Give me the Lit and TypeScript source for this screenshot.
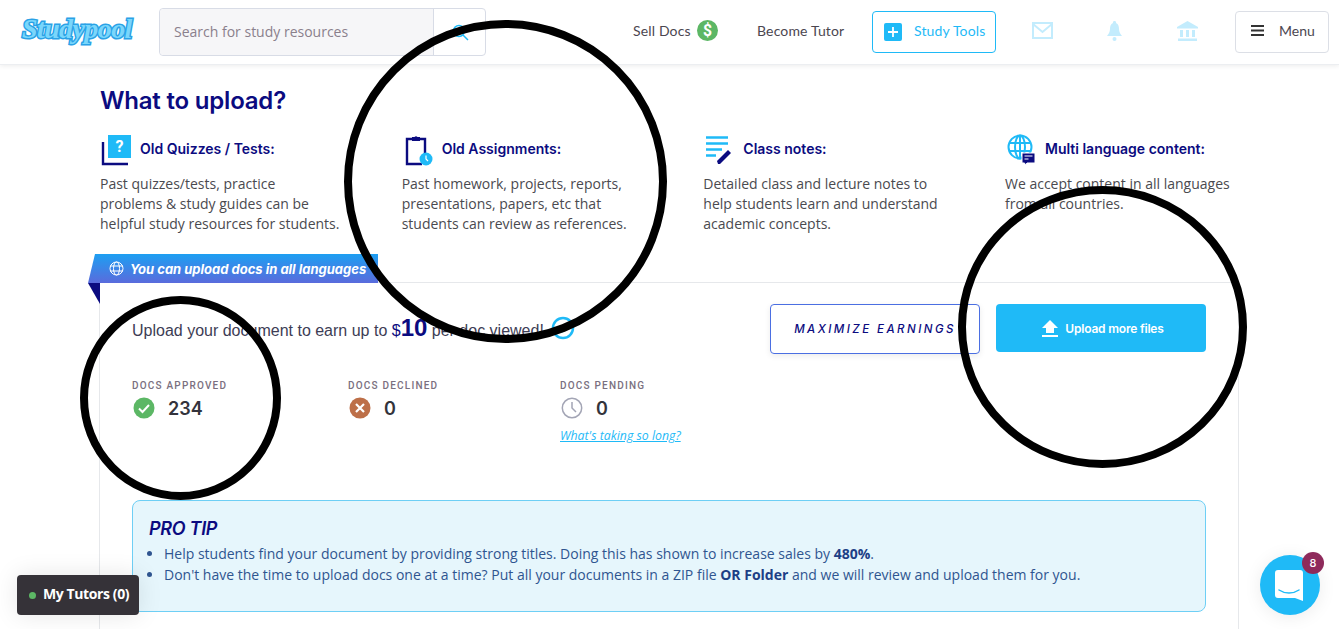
import { LitElement, html, css, svg } from "lit";
import { customElement } from "lit/decorators.js";

const PALE = "#c3ecfd";
const BLUE = "#1fbaf7";
const NAVY = "#0b0b80";

const cards = [
  {
    title: "Old Quizzes / Tests:",
    text: "Past quizzes/tests, practice problems & study guides can be helpful study resources for students.",
    icon: svg`<path d="M2 8v22h25" fill="none" stroke="${NAVY}" stroke-width="2.4"/><rect x="7" y="1" width="23" height="23" fill="${BLUE}"/><text x="18.5" y="18" text-anchor="middle" font-size="16" font-weight="700" font-family="Roboto, sans-serif" fill="#fff">?</text>`,
  },
  {
    title: "Old Assignments:",
    text: "Past homework, projects, reports, presentations, papers, etc that students can review as references.",
    icon: svg`<path d="M9 5H4v25h15M17 5h5v14" fill="none" stroke="${NAVY}" stroke-width="2.4"/><path d="M9 7V3h2.5a2 2 0 0 1 3 0H17v4z" fill="${NAVY}"/><circle cx="23" cy="25" r="6.5" fill="${BLUE}"/><path d="M23 21.5V25l2 2" fill="none" stroke="#fff" stroke-width="1.2"/>`,
  },
  {
    title: "Class notes:",
    text: "Detailed class and lecture notes to help students learn and understand academic concepts.",
    icon: svg`<path d="M2 3.5h22M2 9.5h22M2 15.5h16M2 21.5h10" stroke="${BLUE}" stroke-width="2.4" fill="none"/><path d="M14 30l-1-3 11-11 3 3-11 11z" fill="${NAVY}"/>`,
  },
  {
    title: "Multi language content:",
    text: "We accept content in all languages from all countries.",
    icon: svg`<g fill="none" stroke="${BLUE}" stroke-width="2"><circle cx="14" cy="13" r="11.5"/><ellipse cx="14" cy="13" rx="5" ry="11.5"/><path d="M3 9h22M3 17h22M14 1.5v23"/></g><path d="M16 19h13v10h-8l-1.5 2-1-2H16z" fill="${NAVY}" stroke="#fff"/><path d="M18.500 22h8M18.500 25h4" stroke="#fff" stroke-width="1.200"/>`,
  },
];

@customElement("app-root")
export class AppRoot extends LitElement {
  static styles = css`
    :host {
      --blue: #1fbaf7;
      --navy: #0b0b80;
      display: block;
      position: relative;
      height: 629px;
      overflow: hidden;
      background: #fff;
      font-family: "Open Sans", sans-serif;
      color: #444;
    }
    * { box-sizing: border-box; }
    header {
      height: 65px;
      display: flex;
      align-items: center;
      border-bottom: 1px solid #eceef1;
      box-shadow: 0 1px 5px rgba(0, 0, 0, 0.08);
      padding: 0 10px 1px 22px;
    }
    .logo {
      width: 137px;
      font: italic 700 28px "Liberation Serif", serif;
      letter-spacing: -0.6px;
      color: #7ad6fb;
      -webkit-text-stroke: 3px #2aa2e6;
      paint-order: stroke fill;
      margin-top: -6px;
      white-space: nowrap;
    }
    .search {
      width: 327px;
      height: 48px;
      display: flex;
      border: 1px solid #d8dce6;
      border-radius: 4px;
    }
    .search .input {
      width: 274px;
      background: #f6f6f8;
      border-right: 1px solid #d8dce6;
      padding-left: 14px;
      line-height: 46px;
      font-size: 14px;
      color: #8a808c;
      border-radius: 4px 0 0 4px;
    }
    .search .go {
      flex: 1;
      display: flex;
      align-items: center;
      justify-content: center;
    }
    .nav {
      font: 400 14px Lato, sans-serif;
      letter-spacing: 0.15px;
      color: #4b4650;
      white-space: nowrap;
    }
    .sell {
      margin-left: 147px;
      width: 124px;
      display: flex;
      align-items: center;
      gap: 6px;
      margin-top: -2px;
    }
    .become { width: 115px; margin-top: -2px; }
    .tools {
      width: 124px;
      height: 42px;
      border: 1px solid var(--blue);
      border-radius: 4px;
      display: flex;
      align-items: center;
      padding: 0 0 2px 11px;
      gap: 12px;
      color: var(--blue);
    }
    .plus {
      width: 18px;
      height: 18px;
      background: var(--blue);
      border-radius: 2px;
      display: flex;
      align-items: center;
      justify-content: center;
      margin-top: 2px;
    }
    .pale {
      display: flex;
      align-items: center;
      margin-left: 36px;
      gap: 50px;
      margin-top: -2px;
    }
    .bell { margin-left: 3px; }
    .bank { margin-left: 4px; }
    .menu {
      margin-left: auto;
      width: 94px;
      height: 42px;
      border: 1px solid #dcdfe6;
      border-radius: 4px;
      display: flex;
      align-items: center;
      padding: 0 0 2px 15px;
      gap: 15px;
      letter-spacing: 0;
    }
    main {
      padding: 22px 100px 0;
    }
    h1 {
      margin: 0;
      font: 600 24px/28px Inter, sans-serif;
      letter-spacing: -0.2px;
      color: var(--navy);
    }
    .cards {
      display: grid;
      grid-template-columns: repeat(4, 301.67px);
      margin-top: 17px;
      height: 150px;
    }
    .card-head {
      display: flex;
      align-items: center;
      gap: 8px;
      height: 32px;
      font: 600 14px Inter, sans-serif;
      letter-spacing: 0;
      color: var(--navy);
    }
    .card-head svg { margin: 3px 0 0 1px; }
    .card p {
      margin: 10px 0 0;
      width: 240px;
      font-size: 14px;
      line-height: 20px;
      color: #4a4a4f;
    }
    .panel {
      position: relative;
      margin: 0 0 0 -1px;
      width: 1140px;
      height: 400px;
      border: 1px solid #e6e8eb;
      border-bottom: 0;
      padding: 21px 32px;
    }
    .ribbon {
      position: absolute;
      left: -12px;
      top: -29px;
      width: 290px;
      height: 29px;
      background: linear-gradient(#1d9ff2, #5a6bdc);
      clip-path: polygon(7px 0, 100% 0, 100% 100%, 0 100%);
      display: flex;
      align-items: center;
      padding-left: 21px;
      gap: 6px;
      color: #fff;
      font: italic 700 13px Inter, sans-serif;
      white-space: nowrap;
    }
    .fold {
      position: absolute;
      left: -12px;
      top: 0;
      width: 12px;
      height: 21px;
      background: var(--navy);
      clip-path: polygon(0 0, 100% 0, 100% 100%);
    }
    .top-row { display: flex; align-items: flex-start; }
    .earn {
      flex: 1;
      padding-top: 10px;
      display: flex;
      align-items: baseline;
      font: 16px "Liberation Sans", sans-serif;
      color: #3d3d55;
      white-space: pre;
    }
    .earn .d { color: var(--navy); }
    .earn b { color: var(--navy); font-size: 24px; line-height: 28px; }
    .earn svg { align-self: center; margin-left: 7px; }
    .btn {
      width: 210px;
      border-radius: 4px;
      display: flex;
      align-items: center;
      justify-content: center;
      white-space: nowrap;
    }
    .maximize {
      height: 50px;
      border: 1px solid #4b6fe2;
      box-shadow: 0 2px 6px rgba(0, 0, 0, 0.08);
      color: var(--navy);
      font: italic 500 11.5px Inter, sans-serif;
      letter-spacing: 2.45px;
      margin-right: 16px;
    }
    .upload {
      height: 48px;
      background: var(--blue);
      color: #fff;
      font: 600 12px Inter, sans-serif;
      letter-spacing: -0.2px;
      gap: 7px;
      padding-left: 4px;
    }
    .stats {
      display: grid;
      grid-template-columns: 216px 212px 200px;
      margin-top: 26px;
    }
    .label {
      font: 500 10px/12px Roboto, sans-serif;
      letter-spacing: 1.2px;
      color: #7a7080;
    }
    .value {
      display: flex;
      align-items: center;
      gap: 13px;
      height: 24px;
      margin-top: 4px;
      font: 600 18px Inter, sans-serif;
      color: #33333c;
    }
    .value svg { margin-left: 1px; }
    .stat a {
      display: block;
      margin-top: 7px;
      font: italic 400 12.300px "Open Sans", sans-serif;
      color: var(--blue);
      text-decoration: underline;
      white-space: nowrap;
    }
    .tip {
      margin-top: 56px;
      width: 1074px;
      height: 112px;
      background: #e6f6fc;
      border: 1px solid #6ecff5;
      border-radius: 8px;
      padding: 16px 16px;
    }
    .tip h2 {
      margin: 0;
      font: italic 600 18px/24px Inter, sans-serif;
      letter-spacing: -0.3px;
      color: var(--navy);
    }
    .tip ul {
      margin: 2px 0 0;
      padding: 0 0 0 15px;
      font-size: 14px;
      line-height: 21px;
      color: #2f5590;
    }
    .tip li b { color: #1d3f86; font-weight: 700; }
    .tutors {
      position: absolute;
      left: 17px;
      top: 575px;
      width: 122px;
      height: 40px;
      background: #353238;
      border-radius: 4px;
      display: flex;
      align-items: center;
      padding: 0 0 3px 12px;
      gap: 7px;
      color: #fff;
      font: 700 14px "Open Sans", sans-serif;
      letter-spacing: -0.4px;
      box-shadow: 0 0 24px rgba(0, 0, 0, 0.1);
      white-space: nowrap;
    }
    .tutors i {
      width: 7px;
      height: 7px;
      border-radius: 50%;
      background: #5cb765;
      margin-top: 3px;
    }
    .chat {
      position: absolute;
      left: 1260px;
      top: 555px;
      width: 60px;
      height: 60px;
      border-radius: 50%;
      background: var(--blue);
      box-shadow: 0 2px 18px rgba(0, 0, 0, 0.08);
      display: flex;
      align-items: center;
      justify-content: center;
    }
    .badge {
      position: absolute;
      left: 42px;
      top: -3px;
      width: 22px;
      height: 22px;
      border-radius: 50%;
      background: #8e2a5b;
      color: #fff;
      font: 500 11px/22px Inter, sans-serif;
      text-align: center;
    }
    .marks {
      position: absolute;
      left: 0;
      top: 0;
      pointer-events: none;
    }
  `;

  render() {
    return html`
      <header>
        <div class="logo">Studypool</div>
        <div class="search">
          <div class="input">Search for study resources</div>
          <div class="go">
            <svg width="18" height="18" viewBox="0 0 18 18" fill="none" stroke="${BLUE}" stroke-width="1.500"><circle cx="8" cy="8" r="5.500"/><path d="M12 12l5 5"/></svg>
          </div>
        </div>
        <div class="nav sell">
          Sell Docs
          <svg width="21" height="21" viewBox="0 0 20 20"><circle cx="10" cy="10" r="10" fill="#5cb765"/><text x="10" y="15.500" text-anchor="middle" font-size="15" font-weight="700" font-family="Roboto, sans-serif" fill="#fff">$</text></svg>
        </div>
        <div class="nav become">Become Tutor</div>
        <div class="nav tools">
          <span class="plus"><svg width="10" height="10" viewBox="0 0 10 10"><path d="M5 0v10M0 5h10" stroke="#fff" stroke-width="1.800"/></svg></span>
          Study Tools
        </div>
        <div class="pale">
          <svg width="21" height="17" viewBox="0 0 21 17" fill="none" stroke="${PALE}" stroke-width="2"><rect x="1" y="1" width="19" height="15"/><path d="M1 2l9.500 8L20 2"/></svg>
          <svg class="bell" width="17" height="20" viewBox="0 0 17 20" fill="${PALE}"><path d="M8.500 0a1.500 1.500 0 0 1 1.500 2c2.500 1 3 3.500 3 6 0 3 1.500 5 3 7H1c1.500-2 3-4 3-7 0-2.500.5-5 3-6a1.500 1.500 0 0 1 1.500-2z"/><circle cx="8.500" cy="18" r="2"/></svg>
          <svg class="bank" width="21" height="20" viewBox="0 0 21 20" fill="${PALE}"><path d="M10.500 0L21 6v1.500H0V6z"/><path d="M3 9h3v7H3zM9 9h3v7H9zM15 9h3v7h-3zM1 17.500h19V20H1z"/></svg>
        </div>
        <div class="nav menu">
          <svg width="13" height="11" viewBox="0 0 13 11" fill="#333"><rect width="13" height="2"/><rect y="4.500" width="13" height="2"/><rect y="9" width="13" height="2"/></svg>
          Menu
        </div>
      </header>
      <main>
        <h1>What to upload?</h1>
        <div class="cards">
          ${cards.map(
            (c) => html`
              <div class="card">
                <div class="card-head">
                  <svg width="31" height="32" viewBox="0 0 31 32">${c.icon}</svg>
                  ${c.title}
                </div>
                <p>${c.text}</p>
              </div>
            `
          )}
        </div>
        <div class="panel">
          <div class="ribbon">
            <svg width="15" height="15" viewBox="0 0 15 15" fill="none" stroke="#fff" stroke-width="1"><circle cx="7.500" cy="7.500" r="6.500"/><ellipse cx="7.500" cy="7.500" rx="3" ry="6.500"/><path d="M1 5h13M1 10h13"/></svg>
            You can upload docs in all languages
          </div>
          <div class="fold"></div>
          <div class="top-row">
            <div class="earn">Upload your document to earn up to <span class="d">$</span><b>10</b> per doc viewed!<svg width="24" height="24" viewBox="0 0 24 24" fill="none" stroke="${BLUE}" stroke-width="2.500"><circle cx="12" cy="12" r="10"/><path d="M8 12l3 3 5-6"/></svg></div>
            <div class="btn maximize">MAXIMIZE EARNINGS</div>
            <div class="btn upload">
              <svg width="16" height="17" viewBox="0 0 16 17" fill="#fff"><path d="M8 0l8 8h-4v5H4V8H0zM0 15h16v2H0z"/></svg>
              Upload more files
            </div>
          </div>
          <div class="stats">
            <div class="stat">
              <div class="label">DOCS APPROVED</div>
              <div class="value">
                <svg width="22" height="22" viewBox="0 0 22 22"><circle cx="11" cy="11" r="10.500" fill="#5cb765"/><path d="M6 11.500l3.500 3.500L16 8" fill="none" stroke="#fff" stroke-width="2"/></svg>
                234
              </div>
            </div>
            <div class="stat">
              <div class="label">DOCS DECLINED</div>
              <div class="value">
                <svg width="22" height="22" viewBox="0 0 22 22"><circle cx="11" cy="11" r="10.500" fill="#bd6f48"/><path d="M7 7l8 8M15 7l-8 8" fill="none" stroke="#fff" stroke-width="2.200"/></svg>
                0
              </div>
            </div>
            <div class="stat">
              <div class="label">DOCS PENDING</div>
              <div class="value">
                <svg width="22" height="22" viewBox="0 0 22 22" fill="none" stroke="#a3a5b5" stroke-width="1.500"><circle cx="11" cy="11" r="9.700"/><path d="M11 5v6l4 4"/></svg>
                0
              </div>
              <a>What's taking so long?</a>
            </div>
          </div>
          <div class="tip">
            <h2>PRO TIP</h2>
            <ul>
              <li>Help students find your document by providing strong titles. Doing this has shown to increase sales by <b>480%</b>.</li>
              <li>Don't have the time to upload docs one at a time? Put all your documents in a ZIP file <b>OR Folder</b> and we will review and upload them for you.</li>
            </ul>
          </div>
        </div>
      </main>
      <div class="tutors"><i></i>My Tutors (0)</div>
      <div class="chat">
        <svg width="30" height="31" viewBox="0 0 30 31"><path d="M3 0h22a3 3 0 0 1 3 3v28l-8-3H3a3 3 0 0 1-3-3V3a3 3 0 0 1 3-3z" fill="#fff"/><path d="M4 20c6 4 14 4 20 0" fill="none" stroke="${BLUE}" stroke-width="1.500" stroke-linecap="round"/></svg>
        <div class="badge">8</div>
      </div>
      <svg class="marks" width="1339" height="629" fill="none" stroke="#000" stroke-width="8">
        <ellipse cx="505.500" cy="181.500" rx="157.500" ry="157.500"/>
        <ellipse cx="180.500" cy="398" rx="96.500" ry="98"/>
        <ellipse cx="1102.500" cy="327" rx="140.500" ry="137"/>
      </svg>
    `;
  }
}
